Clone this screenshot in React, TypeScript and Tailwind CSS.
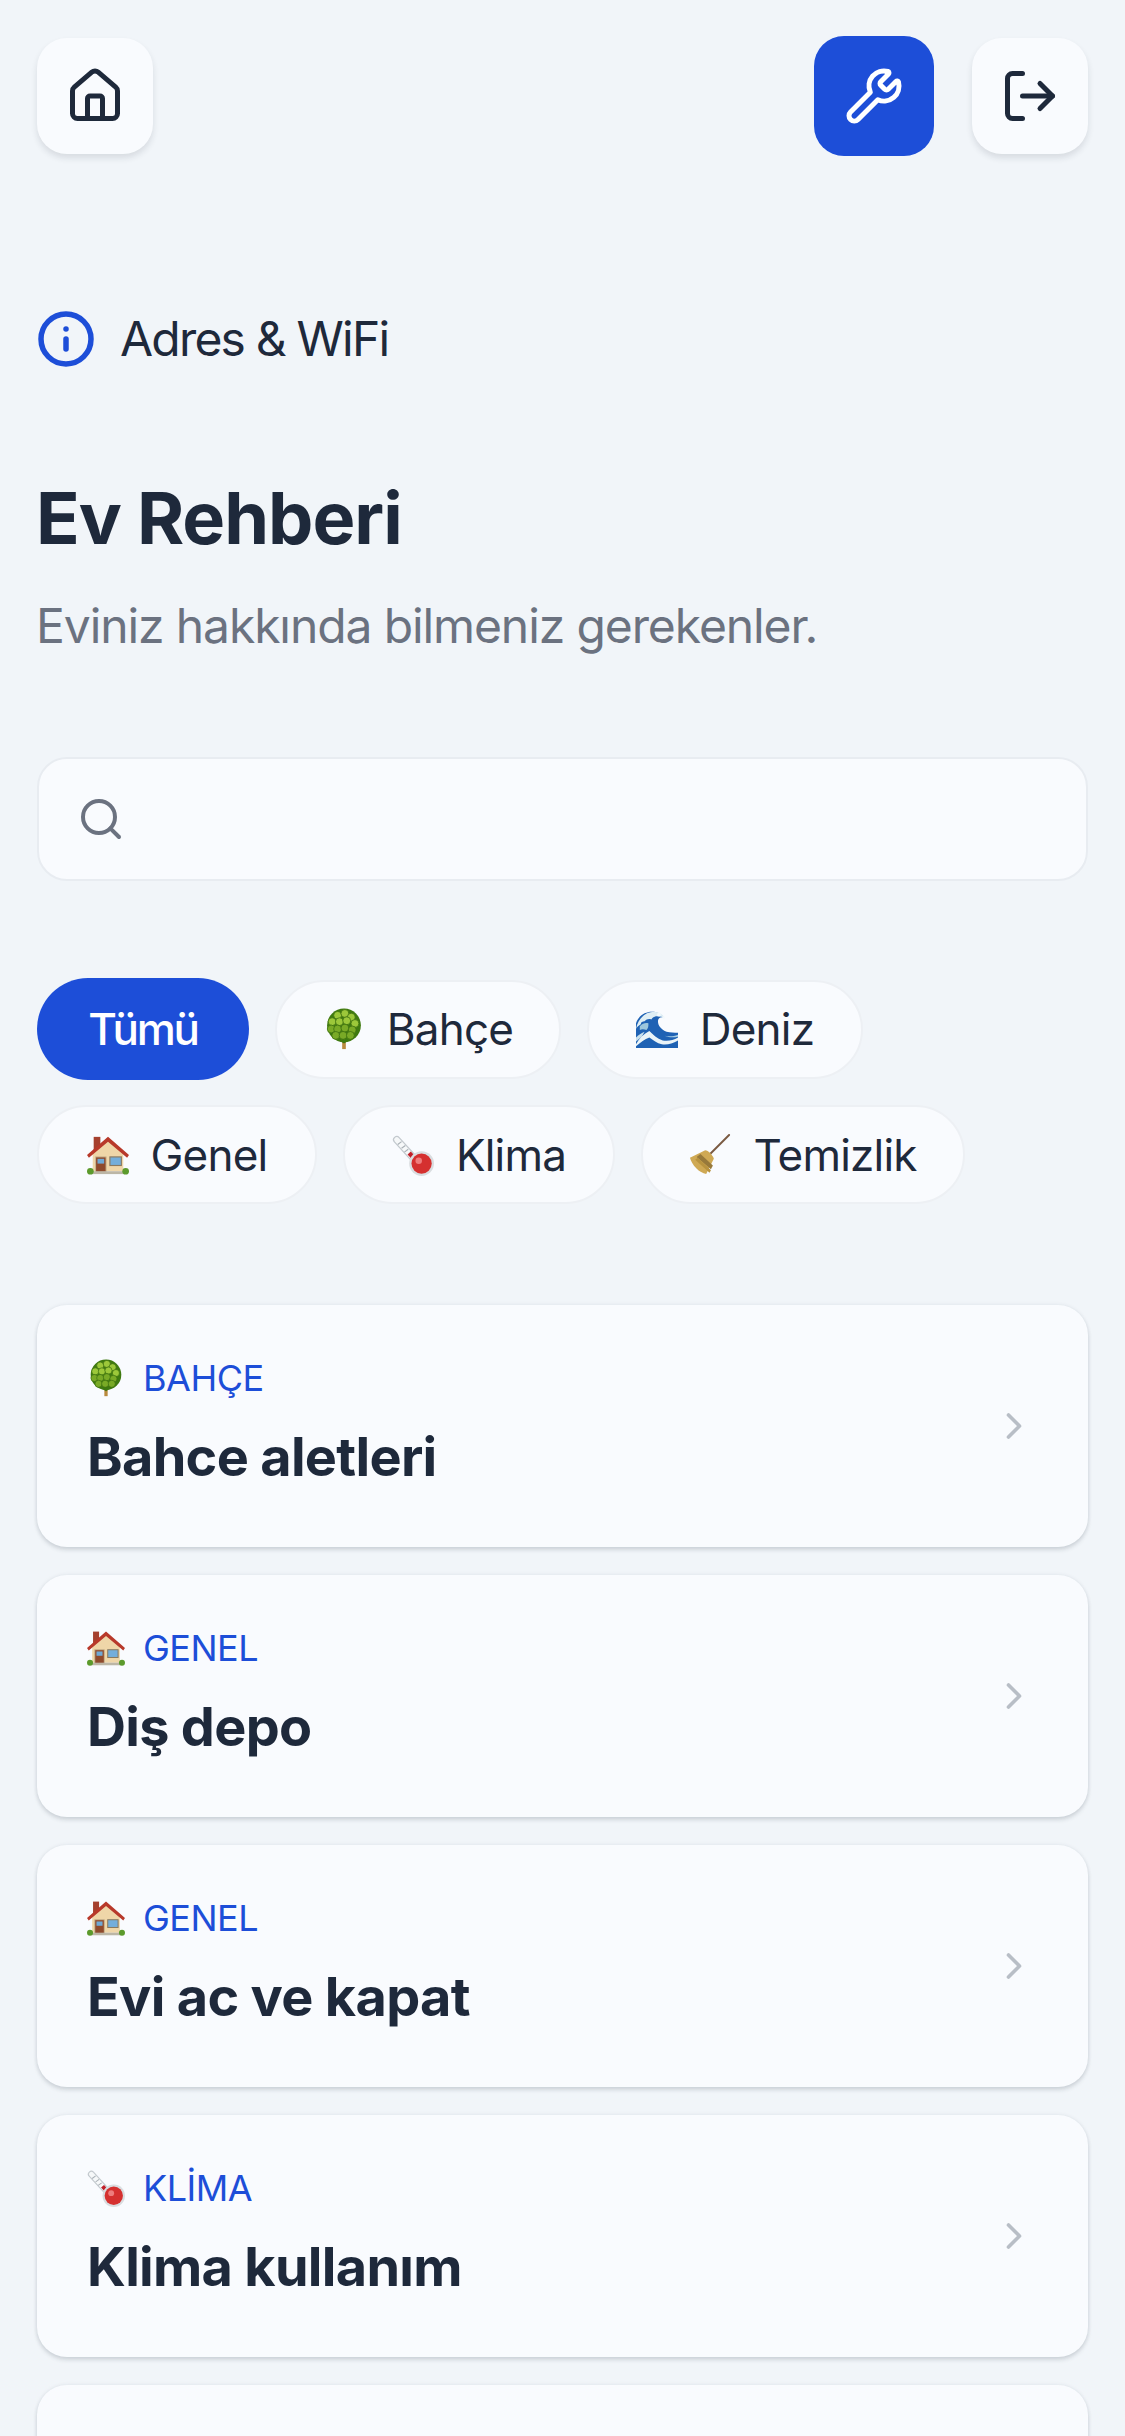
import { House, Wrench, LogOut, Info, Search, ChevronRight } from "lucide-react";

const Tree = ({ s = 46 }: { s?: number }) => (
  <svg width={s} height={s} viewBox="0 0 40 46">
    <rect x="18" y="33" width="4" height="12" fill="#b98a3e" />
    <path d="M14 35 20 39 26 35z" fill="#3f7410" />
    <circle cx="20" cy="19" r="18.5" fill="#3f7a10" />
    {[[13,8],[21,6],[28,10],[7,15],[15,15],[23,14],[32,17],[6,23],[13,23],[21,22],[29,24],[11,30],[19,30],[27,30]].map(([x,y],i)=>(
      <circle key={i} cx={x} cy={y} r="4.3" fill={y < 18 ? "#9cc83a" : "#79aa26"} stroke="#3a6d0e" strokeWidth="0.8" />
    ))}
  </svg>
);

const Wave = ({ s = 46 }: { s?: number }) => (
  <svg width={s} height={s} viewBox="0 0 44 40">
    <path d="M0 40V14C3 5 11 1 19 2c5 1 8 3 10 6-4-1-6 1-6 4 0 5 4 9 9 11 4 1 8 1 12 1v16z" fill="#1f62b4" />
    <path d="M0 20C2 9 10 2 19 2c5 0 9 3 11 6l-5-1c-4-1-7 0-9 3-3-1-5 0-7 2-2 0-4 1-4 3-2 1-4 3-5 5z" fill="#dfeef4" />
    <circle cx="24" cy="5" r="2" fill="#f4fafc" />
    <circle cx="29" cy="8" r="1.4" fill="#f4fafc" />
    <path d="M4 17c3-3 6-4 9-3 0 3 0 5-2 7-3-1-5-1-7 0z" fill="#9cc6dc" />
    <path d="M0 36c3-6 8-11 14-14 4 4 8 8 14 10 5 1 11 0 16-3v3c-6 3-11 5-17 4-5-1-9-4-13-7-5 2-9 5-14 9z" fill="#eaf4f8" />
    <path d="M0 29c3-3 6-5 9-6l-3 5-6 5z" fill="#c9e0ec" />
    <path d="M30 27c4 1 9 1 14-1v2c-5 1-9 1-14-1z" fill="#a8cde2" />
  </svg>
);

const HouseEmoji = ({ s = 46 }: { s?: number }) => (
  <svg width={s} height={s} viewBox="0 0 44 44">
    <rect x="7" y="3" width="7" height="14" fill="#a5402e" />
    <path d="M6 20 22 7l16 13v19H6z" fill="#efd6a8" />
    <path d="M0 22 22 3l22 19-2 3L22 8 2 25z" fill="#b8392a" />
    <rect x="9" y="24" width="11" height="16" fill="#8f4a2c" stroke="#c9b892" strokeWidth="1" />
    <rect x="11" y="26" width="7" height="5" fill="#6fa9d6" />
    <rect x="24" y="24" width="12" height="9" fill="#74aedb" stroke="#8a7a60" strokeWidth="1.2" />
    <rect x="5" y="39" width="34" height="3" fill="#bcb6a6" />
    <circle cx="3.5" cy="39" r="3.5" fill="#5c9a2c" />
    <circle cx="40.5" cy="39" r="3.5" fill="#5c9a2c" />
  </svg>
);

const Thermo = ({ s = 46 }: { s?: number }) => (
  <svg width={s} height={s} viewBox="0 0 44 44">
    <path d="M5 6 26 29" stroke="#c3c9ce" strokeWidth="8" strokeLinecap="round" />
    <path d="M5 6 26 29" stroke="#f6f8f9" strokeWidth="5.4" strokeLinecap="round" />
    <path d="M6 11l4-3M10 15l4-3M13 19l4-3" stroke="#a9b0b6" strokeWidth="1.2" />
    <path d="M18 20 30 33" stroke="#c01f28" strokeWidth="4.6" />
    <circle cx="31" cy="31" r="13" fill="#d9dde0" />
    <circle cx="31" cy="31" r="10.6" fill="#d5302f" />
    <circle cx="28" cy="28" r="3.4" fill="#ee7d7d" />
  </svg>
);

const Broom = ({ s = 46 }: { s?: number }) => (
  <svg width={s} height={s} viewBox="0 0 44 44">
    <path d="M42 1 20 23" stroke="#7a5a42" strokeWidth="2" strokeLinecap="round" />
    <path d="M17 17c3 0 8 5 9 9l-8 16c-7-1-15-9-17-17z" fill="#cfa954" />
    <path d="M12 21l13 12-2 4L8 24z" fill="#97793a" />
    <path d="M9 25l14 13-1.500 2.500L6.500 27z" fill="#b8933f" />
  </svg>
);

const chips1 = [
  { label: "Bahçe", Icon: Tree, w: "w-[286px]" },
  { label: "Deniz", Icon: Wave, w: "w-[276px]" },
];
const chips2 = [
  { label: "Genel", Icon: HouseEmoji, w: "w-[280px]" },
  { label: "Klima", Icon: Thermo, w: "w-[272px]" },
  { label: "Temizlik", Icon: Broom, w: "w-[324px]" },
];

const cards = [
  { cat: "BAHÇE", title: "Bahce aletleri", Icon: Tree },
  { cat: "GENEL", title: "Diş depo", Icon: HouseEmoji },
  { cat: "GENEL", title: "Evi ac ve kapat", Icon: HouseEmoji },
  { cat: "KLİMA", title: "Klima kullanım", Icon: Thermo },
  { cat: "", title: "", Icon: null },
];

function Chip({ label, Icon, w }: { label: string; Icon: any; w: string }) {
  return (
    <div className={`${w} flex h-[99px] items-center justify-center gap-[22px] rounded-full border-2 border-[#edf0f4] bg-[#f9fbfe] text-[44px] tracking-[-0.8px] text-[#1e293b]`}>
      <Icon s={42} />
      <span>{label}</span>
    </div>
  );
}

export default function App() {
  return (
    <div className="h-[2436px] overflow-hidden bg-[#f1f5f9] px-[37px] font-['Inter','Noto_Sans',sans-serif]">
      <div className="flex items-center justify-between pt-[36px]">
        <button className="flex h-[116px] w-[116px] items-center justify-center rounded-[30px] bg-[#f9fbfe] shadow-[0_4px_6px_rgba(30,41,59,0.12)]">
          <House size={60} strokeWidth={2} className="text-[#1e293b]" />
        </button>
        <div className="flex items-center gap-[38px]">
          <button className="flex h-[120px] w-[120px] items-center justify-center rounded-[30px] bg-[#1d4ed8]">
            <Wrench size={60} strokeWidth={2} className="text-white" />
          </button>
          <button className="flex h-[116px] w-[116px] items-center justify-center rounded-[30px] bg-[#f9fbfe] shadow-[0_4px_6px_rgba(30,41,59,0.12)]">
            <LogOut size={60} strokeWidth={2} className="text-[#1e293b]" />
          </button>
        </div>
      </div>

      <div className="mt-[153px] flex items-center gap-[24px]">
        <Info size={60} strokeWidth={2.2} className="-ml-px text-[#1d4ed8]" />
        <span className="text-[48px] leading-[58px] tracking-[-1.8px] text-[#1e293b]">Adres &amp; WiFi</span>
      </div>

      <h1 className="mt-[104px] -ml-px text-[72px] leading-[90px] font-bold tracking-[-1px] text-[#1e293b]">Ev Rehberi</h1>
      <p className="mt-[31px] -ml-px text-[48px] leading-[64px] tracking-[-1.1px] text-[#6b7280]">Eviniz hakkında bilmeniz gerekenler.</p>

      <div className="mt-[99px] flex h-[124px] items-center rounded-[30px] border-2 border-[#e8ecf1] bg-[#f9fbfe] pl-[38px]">
        <Search size={48} strokeWidth={2} className="text-[#6b7280]" />
      </div>

      <div className="mt-[97px] flex flex-col gap-[25px]">
        <div className="flex items-center gap-[26px]">
          <div className="flex h-[102px] w-[212px] items-center justify-center rounded-full bg-[#1d4ed8] text-[44px] font-medium tracking-[-2.2px] text-white">Tümü</div>
          {chips1.map((c) => <Chip key={c.label} {...c} />)}
        </div>
        <div className="flex items-center gap-[26px]">
          {chips2.map((c) => <Chip key={c.label} {...c} />)}
        </div>
      </div>

      <div className="mt-[101px] flex flex-col gap-[28px]">
        {cards.map((c, i) => (
          <div key={i} className="flex h-[242px] shrink-0 items-center justify-between rounded-[30px] bg-[#f9fbfe] pr-[52px] pl-[50px] shadow-[0_3px_4px_rgba(30,41,59,0.14),0_0_4px_rgba(30,41,59,0.08)]">
            {c.Icon && (
              <>
                <div className="flex -translate-y-[4px] flex-col">
                  <div className="flex h-[50px] items-center gap-[18px]">
                    <c.Icon s={38} />
                    <span className="text-[36px] tracking-[-0.5px] text-[#1d4ed8]">{c.cat}</span>
                  </div>
                  <div className="mt-[19px] text-[54px] leading-[70px] font-bold tracking-[-0.7px] text-[#1e293b]">{c.title}</div>
                </div>
                <ChevronRight size={44} strokeWidth={2} className="text-[#b8bec6]" />
              </>
            )}
          </div>
        ))}
      </div>
    </div>
  );
}
